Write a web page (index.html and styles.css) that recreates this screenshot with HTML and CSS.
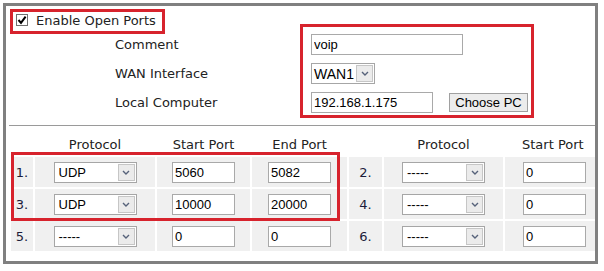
FILE: index.html
```html
<!DOCTYPE html>
<html>
<head>
<meta charset="utf-8">
<link rel="stylesheet" href="styles.css">
</head>
<body>
<div class="frame">
  <div class="enable">
    <span class="cb"><svg width="10" height="10" viewBox="0 0 10 10"><path d="M1.5 5 L4 7.8 L8.6 1.6" fill="none" stroke="#000" stroke-width="2"/></svg></span>
    <span class="enable-label">Enable Open Ports</span>
  </div>
  <div class="form">
    <div class="label">Comment</div>
    <div class="field"><input class="txt w-comment" value="voip"></div>
    <div class="label">WAN Interface</div>
    <div class="field"><div class="sel w-wan"><span class="sel-text">WAN1</span><span class="arrow"><svg width="8" height="5" viewBox="0 0 8 5"><path d="M1 1 L4 4 L7 1" fill="none" stroke="#56627a" stroke-width="1.4"/></svg></span></div></div>
    <div class="label">Local Computer</div>
    <div class="field"><input class="txt w-local" value="192.168.1.175"><button class="btn">Choose PC</button></div>
  </div>
  <div class="sep"></div>
  <div class="ports">
    <div class="hd"></div><div class="hd">Protocol</div><div class="hd">Start Port</div><div class="hd">End Port</div><div class="hd"></div><div class="hd">Protocol</div><div class="hd last">Start Port</div>

    <div class="cell num">1.</div>
    <div class="cell"><div class="sel w-proto"><span class="sel-text">UDP</span><span class="arrow"><svg width="8" height="5" viewBox="0 0 8 5"><path d="M1 1 L4 4 L7 1" fill="none" stroke="#56627a" stroke-width="1.4"/></svg></span></div></div>
    <div class="cell"><input class="txt w-port" value="5060"></div>
    <div class="cell"><input class="txt w-port" value="5082"></div>
    <div class="cell num">2.</div>
    <div class="cell"><div class="sel w-proto"><span class="sel-text">-----</span><span class="arrow"><svg width="8" height="5" viewBox="0 0 8 5"><path d="M1 1 L4 4 L7 1" fill="none" stroke="#56627a" stroke-width="1.4"/></svg></span></div></div>
    <div class="cell last"><input class="txt w-port" value="0"></div>

    <div class="cell num">3.</div>
    <div class="cell"><div class="sel w-proto"><span class="sel-text">UDP</span><span class="arrow"><svg width="8" height="5" viewBox="0 0 8 5"><path d="M1 1 L4 4 L7 1" fill="none" stroke="#56627a" stroke-width="1.4"/></svg></span></div></div>
    <div class="cell"><input class="txt w-port" value="10000"></div>
    <div class="cell"><input class="txt w-port" value="20000"></div>
    <div class="cell num">4.</div>
    <div class="cell"><div class="sel w-proto"><span class="sel-text">-----</span><span class="arrow"><svg width="8" height="5" viewBox="0 0 8 5"><path d="M1 1 L4 4 L7 1" fill="none" stroke="#56627a" stroke-width="1.4"/></svg></span></div></div>
    <div class="cell last"><input class="txt w-port" value="0"></div>

    <div class="cell num">5.</div>
    <div class="cell"><div class="sel w-proto"><span class="sel-text">-----</span><span class="arrow"><svg width="8" height="5" viewBox="0 0 8 5"><path d="M1 1 L4 4 L7 1" fill="none" stroke="#56627a" stroke-width="1.4"/></svg></span></div></div>
    <div class="cell"><input class="txt w-port" value="0"></div>
    <div class="cell"><input class="txt w-port" value="0"></div>
    <div class="cell num">6.</div>
    <div class="cell"><div class="sel w-proto"><span class="sel-text">-----</span><span class="arrow"><svg width="8" height="5" viewBox="0 0 8 5"><path d="M1 1 L4 4 L7 1" fill="none" stroke="#56627a" stroke-width="1.4"/></svg></span></div></div>
    <div class="cell last"><input class="txt w-port" value="0"></div>
  </div>

  <div class="hl hl-enable"></div>
  <div class="hl hl-form"></div>
  <div class="hl hl-rows"></div>
</div>
</body>
</html>
```

FILE: styles.css
```css
* { box-sizing: border-box; }
html, body { margin: 0; padding: 0; background: #fff; }
body {
  font-family: "DejaVu Sans", Verdana, sans-serif;
  font-size: 13px;
  color: #222;
}
.frame {
  position: relative;
  margin: 3px 0 0 3px;
  width: 595px;
  height: 261px;
  border: 3px solid #808080;
}
.enable {
  display: flex;
  align-items: center;
  height: 20px;
  margin-top: 4px;
  padding-left: 10px;
  gap: 8px;
}
.cb {
  width: 12px;
  height: 12px;
  border: 1px solid #707070;
  background: #fff;
  display: flex;
  align-items: center;
  justify-content: center;
}
.cb svg { display: block; }
.form {
  display: grid;
  grid-template-columns: 196px auto;
  grid-auto-rows: 29px;
  padding-left: 109px;
}
.label { display: flex; align-items: center; }
.field { display: flex; align-items: center; gap: 16px; }
.txt {
  font-family: "Liberation Sans", Arial, sans-serif;
  font-size: 13px;
  color: #000;
  height: 21px;
  border: 1px solid #a9a9a9;
  padding: 0 2px;
  margin: 0;
  background: #fff;
  outline: none;
}
.w-comment { width: 152px; }
.w-local { width: 122px; }
.w-port { width: 63px; }
.btn {
  font-family: "Liberation Sans", Arial, sans-serif;
  font-size: 13px;
  color: #000;
  width: 79px;
  height: 19px;
  padding: 0;
  margin: 0;
  border: 1px solid #a0a0a0;
  background: #ececec;
  border-radius: 0;
}
.sel {
  display: flex;
  align-items: stretch;
  height: 21px;
  border: 1px solid #a6a6a6;
  background: #fff;
  font-family: "Liberation Sans", Arial, sans-serif;
  font-size: 13px;
  color: #000;
}
.sel-text {
  flex: 1;
  display: flex;
  align-items: center;
  padding-left: 4px;
}
.arrow {
  width: 17px;
  margin: 1px;
  background: #ebebeb;
  border: 1px solid #c6c6c6;
  display: flex;
  align-items: center;
  justify-content: center;
}
.arrow svg { display: block; }
.w-wan { width: 64px; }
.w-wan .sel-text { padding-left: 2px; font-size: 14px; }
.w-proto { width: 83px; }
.sep {
  height: 1px;
  background: #9a9a9a;
  margin: 8px 0 0 3px;
}
.ports {
  display: grid;
  grid-template-columns: 22px 120px 93px 95px 33px 119px 90px;
  grid-template-rows: 29px 30px 30px 30px;
  column-gap: 2px;
  row-gap: 2px;
  margin-left: 5px;
}
.hd {
  display: flex;
  align-items: flex-end;
  justify-content: center;
  line-height: 16px;
  padding-bottom: 2px;
  white-space: nowrap;
}
.hd.last { justify-content: flex-start; padding-left: 17px; }
.cell {
  background: #f0f0f0;
  display: flex;
  align-items: center;
  justify-content: center;
}
.cell.last { justify-content: flex-start; padding-left: 18px; }
.num { color: #1c1c3a; }
.hl {
  position: absolute;
  border: 3px solid #d7232d;
}
.hl-enable { left: 4px; top: 3px; width: 155px; height: 25px; }
.hl-form { left: 294px; top: 18px; width: 234px; height: 94px; }
.hl-rows { left: 5px; top: 146px; width: 329px; height: 69px; }
```
